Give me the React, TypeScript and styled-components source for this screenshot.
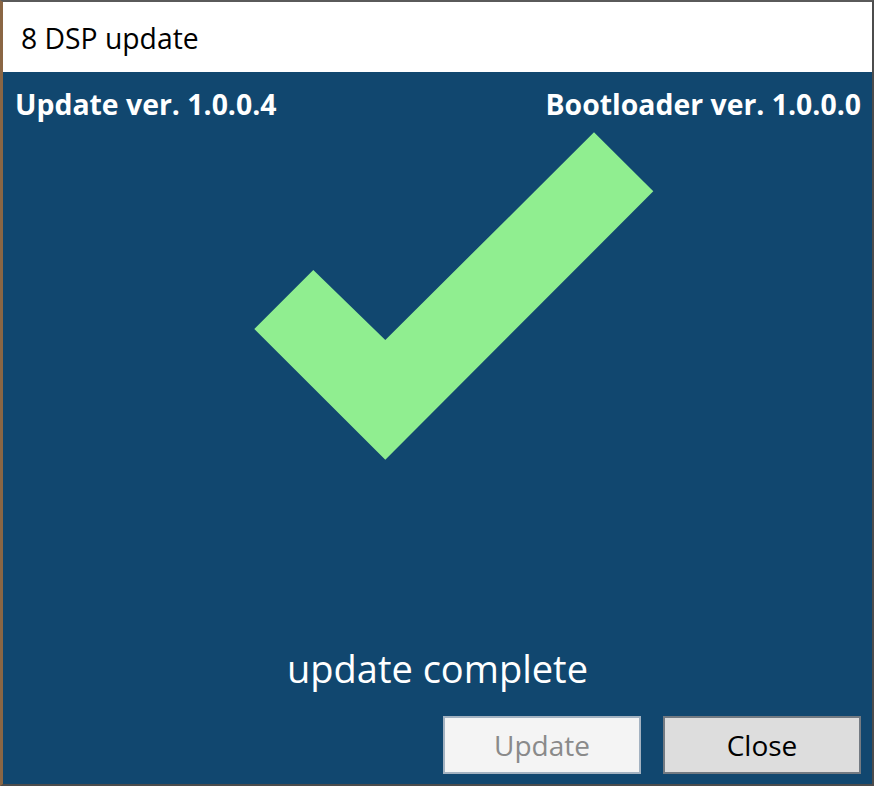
import React from "react";
import styled, { createGlobalStyle } from "styled-components";

const Global = createGlobalStyle`
  html, body { margin: 0; padding: 0; background: #4a4a4a; }
  body { font-family: "Open Sans", "Noto Sans", sans-serif; }
  #root { width: 874px; height: 786px; }
`;

const Frame = styled.div`
  width: 874px;
  height: 786px;
  box-sizing: border-box;
  display: flex;
  flex-direction: column;
  border-top: 2px solid #5a5a5a;
  border-right: 2px solid #4c4c4c;
  border-bottom: 2px solid #4c4c4c;
  border-left: 3px solid #8a6644;
  background: #11476f;
`;

const TitleBar = styled.div`
  height: 70px;
  flex: none;
  background: #ffffff;
  display: flex;
  align-items: center;
  padding-left: 18px;
  padding-top: 1px;
  box-sizing: border-box;
  font-size: 28.3px;
  color: #000;
`;

const Body = styled.div`
  flex: 1;
  display: flex;
  flex-direction: column;
  color: #fff;
`;

const Header = styled.div`
  display: flex;
  justify-content: space-between;
  padding: 13px 11px 0 12px;
  font-weight: 700;
  font-size: 28.4px;
  line-height: 38px;
`;

const Check = styled.svg`
  display: block;
  margin: 8px 0 0 248px;
`;

const Status = styled.div`
  margin-top: auto;
  text-align: center;
  font-size: 38px;
  line-height: 50px;
`;

const ButtonRow = styled.div`
  display: flex;
  justify-content: flex-end;
  gap: 22px;
  padding: 0 11px 10px 0;
  margin-top: 23px;
`;

const Button = styled.button<{ $disabled?: boolean }>`
  width: 198px;
  height: 58px;
  box-sizing: border-box;
  font-family: "Open Sans", "Noto Sans", sans-serif;
  font-size: 28px;
  padding: 0;
  border: 2px solid ${(p) => (p.$disabled ? "#a3b2c1" : "#737a82")};
  background: ${(p) => (p.$disabled ? "#f4f4f4" : "#dddddd")};
  color: ${(p) => (p.$disabled ? "#8a8a8a" : "#000")};
`;

export default function App() {
  return (
    <>
      <Global />
      <Frame>
        <TitleBar>8 DSP update</TitleBar>
        <Body>
          <Header>
            <span>Update ver. 1.0.0.4</span>
            <span>Bootloader ver. 1.0.0.0</span>
          </Header>
          <Check width="404" height="332" viewBox="0 0 404 332">
            <polygon
              points="3.3,198 62.3,139 134.3,209 343,1.3 402.3,60.3 134.3,328.7"
              fill="#90ee90"
            />
          </Check>
          <Status>update complete</Status>
          <ButtonRow>
            <Button $disabled>Update</Button>
            <Button>Close</Button>
          </ButtonRow>
        </Body>
      </Frame>
    </>
  );
}
